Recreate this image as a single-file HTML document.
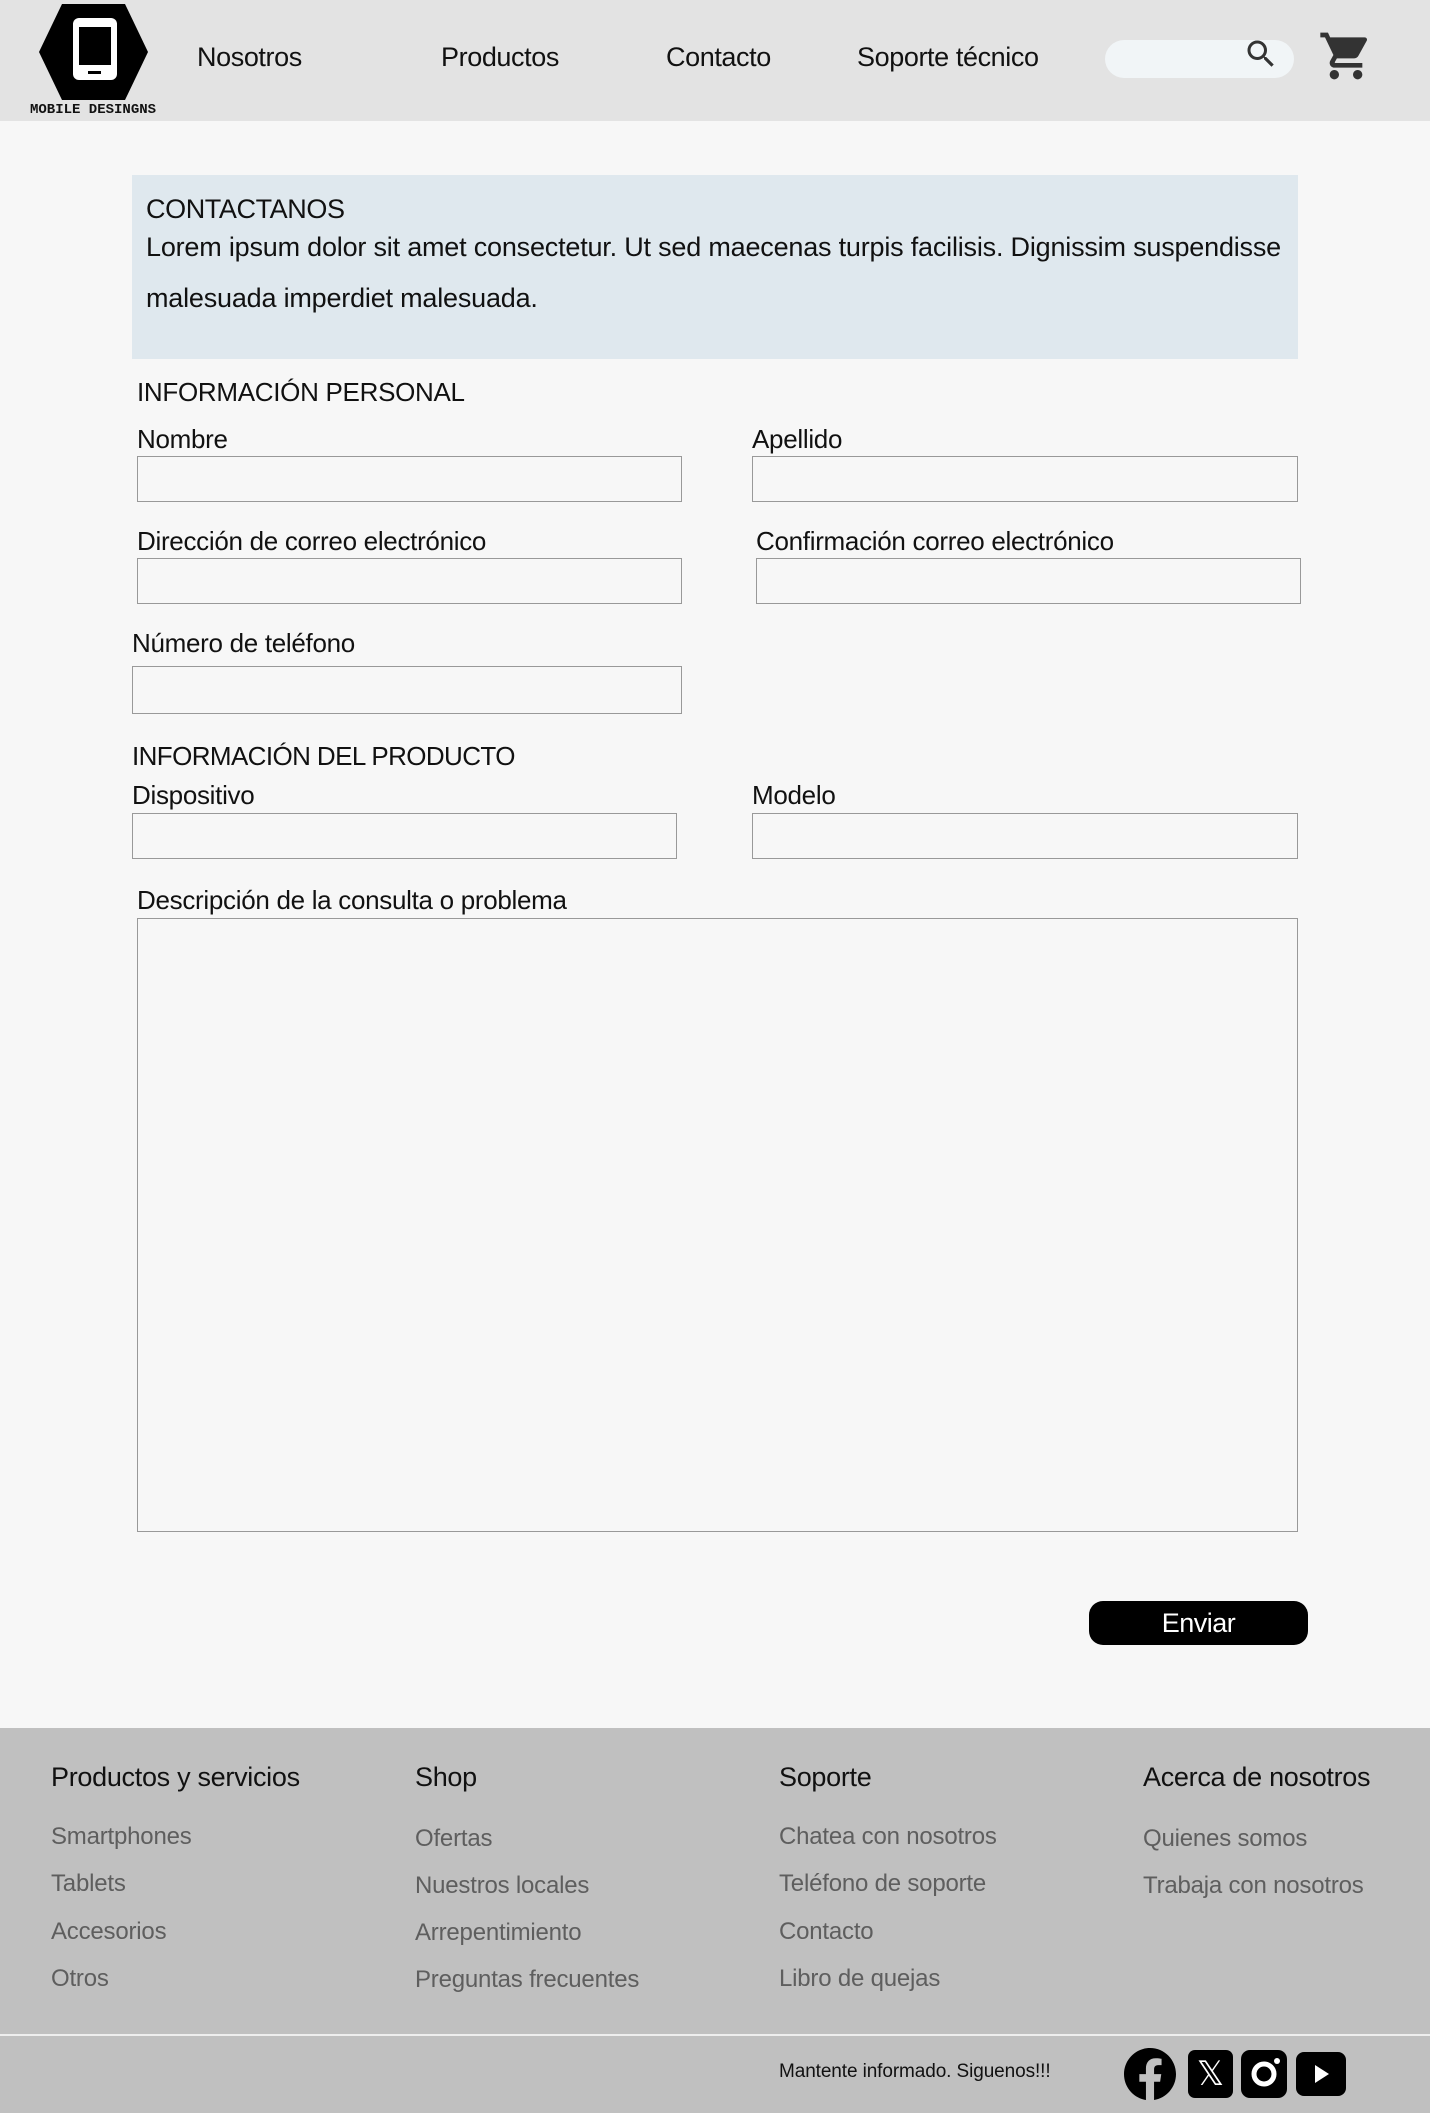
<!DOCTYPE html>
<html><head><meta charset="utf-8"><style>
*{margin:0;padding:0;box-sizing:border-box}
body{width:1430px;height:2113px;background:#f7f7f7;font-family:"Liberation Sans",sans-serif;position:relative;overflow:hidden;color:#111}
.a{position:absolute;white-space:nowrap}
.hdr{position:absolute;left:0;top:0;width:1430px;height:121px;background:#e3e3e3}
.nav{font-size:27px;line-height:32px;letter-spacing:-0.4px}
.lbl{font-size:26px;line-height:30px;letter-spacing:-0.3px}
.in{position:absolute;border:1px solid #999;background:#f7f7f7}
.ft{position:absolute;left:0;top:1728px;width:1430px;height:385px;background:#c0c0c0}
.fh{font-size:27px;line-height:32px;letter-spacing:-0.3px;color:#111}
.fl{font-size:24px;line-height:28px;letter-spacing:-0.2px;color:#5e5e5e}
</style></head><body>
<div class="hdr"></div>
<svg class="a" style="left:0;top:0" width="160" height="121" viewBox="0 0 160 121">
<polygon points="62,4 125,4 148,52 125,100 62,100 39,52" fill="#000"/>
<rect x="73" y="18" width="44" height="62" rx="6" fill="#fff"/>
<rect x="79" y="27" width="32" height="38" fill="#000"/>
<rect x="88" y="71" width="13" height="3" fill="#000"/>
</svg>
<div class="a" style="left:30px;top:102px;font-family:'Liberation Mono',monospace;font-size:14px;line-height:16px;font-weight:bold">MOBILE DESINGNS</div>
<div class="a nav" style="left:197px;top:41px">Nosotros</div>
<div class="a nav" style="left:441px;top:41px">Productos</div>
<div class="a nav" style="left:666px;top:41px">Contacto</div>
<div class="a nav" style="left:857px;top:41px">Soporte técnico</div>
<div class="a" style="left:1105px;top:40px;width:189px;height:38px;border-radius:19px;background:#f1f5f7"></div>
<svg class="a" style="left:1243px;top:36px" width="36" height="36" viewBox="0 0 24 24"><path fill="#333" d="M15.5 14h-.79l-.28-.27A6.47 6.47 0 0016 9.5 6.5 6.5 0 109.5 16c1.610 0 3.09-.59 4.23-1.57l.27.28v.79l5 4.99L20.49 19l-4.99-5zm-6 0C7.01 14 5 11.99 5 9.5S7.01 5 9.5 5 14 7.01 14 9.5 11.99 14 9.5 14z"/></svg>
<svg class="a" style="left:1318px;top:28px" width="56" height="56" viewBox="0 0 24 24"><path fill="#333" d="M7 18c-1.1 0-1.99.9-1.99 2S5.9 22 7 22s2-.9 2-2-.9-2-2-2zM1 2v2h2l3.6 7.59-1.35 2.45c-.16.28-.25.61-.25.96 0 1.1.9 2 2 2h12v-2H7.42c-.14 0-.25-.11-.25-.25l.03-.12.9-1.63h7.45c.75 0 1.41-.41 1.750-1.03l3.58-6.49A1 1 0 0020 4H5.21l-.94-2H1zm16 16c-1.1 0-1.99.9-1.99 2s.89 2 1.99 2 2-.9 2-2-.9-2-2-2z"/></svg>

<div class="a" style="left:132px;top:175px;width:1166px;height:184px;background:#dfe8ee"></div>
<div class="a nav" style="left:146px;top:193px">CONTACTANOS</div>
<div class="a nav" style="left:146px;top:231px;letter-spacing:-0.2px">Lorem ipsum dolor sit amet consectetur. Ut sed maecenas turpis facilisis. Dignissim suspendisse</div>
<div class="a nav" style="left:146px;top:282px;letter-spacing:-0.2px">malesuada imperdiet malesuada.</div>

<div class="a lbl" style="left:137px;top:377px">INFORMACIÓN PERSONAL</div>
<div class="a lbl" style="left:137px;top:424px">Nombre</div>
<div class="in" style="left:137px;top:456px;width:545px;height:46px"></div>
<div class="a lbl" style="left:752px;top:424px">Apellido</div>
<div class="in" style="left:752px;top:456px;width:546px;height:46px"></div>
<div class="a lbl" style="left:137px;top:526px">Dirección de correo electrónico</div>
<div class="in" style="left:137px;top:558px;width:545px;height:46px"></div>
<div class="a lbl" style="left:756px;top:526px">Confirmación correo electrónico</div>
<div class="in" style="left:756px;top:558px;width:545px;height:46px"></div>
<div class="a lbl" style="left:132px;top:628px">Número de teléfono</div>
<div class="in" style="left:132px;top:666px;width:550px;height:48px"></div>
<div class="a lbl" style="left:132px;top:741px;letter-spacing:-0.6px">INFORMACIÓN DEL PRODUCTO</div>
<div class="a lbl" style="left:132px;top:780px">Dispositivo</div>
<div class="in" style="left:132px;top:813px;width:545px;height:46px"></div>
<div class="a lbl" style="left:752px;top:780px">Modelo</div>
<div class="in" style="left:752px;top:813px;width:546px;height:46px"></div>
<div class="a lbl" style="left:137px;top:885px">Descripción de la consulta o problema</div>
<div class="in" style="left:137px;top:918px;width:1161px;height:614px"></div>
<div class="a" style="left:1089px;top:1601px;width:219px;height:44px;border-radius:14px;background:#000;color:#fff;font-size:27px;line-height:44px;text-align:center;letter-spacing:-0.5px">Enviar</div>

<div class="ft"></div>
<div class="a fh" style="left:51px;top:1761px">Productos y servicios</div>
<div class="a fh" style="left:415px;top:1761px">Shop</div>
<div class="a fh" style="left:779px;top:1761px">Soporte</div>
<div class="a fh" style="left:1143px;top:1761px">Acerca de nosotros</div>
<div class="a fl" style="left:51px;top:1823px">Smartphones</div>
<div class="a fl" style="left:51px;top:1870px">Tablets</div>
<div class="a fl" style="left:51px;top:1918px">Accesorios</div>
<div class="a fl" style="left:51px;top:1965px">Otros</div>
<div class="a fl" style="left:415px;top:1825px">Ofertas</div>
<div class="a fl" style="left:415px;top:1872px">Nuestros locales</div>
<div class="a fl" style="left:415px;top:1919px">Arrepentimiento</div>
<div class="a fl" style="left:415px;top:1966px">Preguntas frecuentes</div>
<div class="a fl" style="left:779px;top:1823px">Chatea con nosotros</div>
<div class="a fl" style="left:779px;top:1870px">Teléfono de soporte</div>
<div class="a fl" style="left:779px;top:1918px">Contacto</div>
<div class="a fl" style="left:779px;top:1965px">Libro de quejas</div>
<div class="a fl" style="left:1143px;top:1825px">Quienes somos</div>
<div class="a fl" style="left:1143px;top:1872px">Trabaja con nosotros</div>
<div class="a" style="left:0;top:2034px;width:1430px;height:2px;background:#eee"></div>
<div class="a" style="left:779px;top:2060px;font-size:19px;line-height:24px;letter-spacing:-0.1px">Mantente informado. Siguenos!!!</div>
<svg class="a" style="left:1124px;top:2048px" width="52" height="52" viewBox="0 0 24 24"><path fill="#000" d="M24 12.07C24 5.41 18.63 0 12 0S0 5.4 0 12.07C0 18.1 4.39 23.1 10.13 24v-8.44H7.08v-3.49h3.04V9.41c0-3.02 1.8-4.7 4.54-4.7 1.31 0 2.68.24 2.68.24v2.97h-1.5c-1.5 0-1.96.93-1.96 1.89v2.26h3.32l-.53 3.5h-2.8V24C19.62 23.1 24 18.1 24 12.07"/></svg>
<div class="a" style="left:1188px;top:2050px;width:45px;height:48px;border-radius:7px;background:#000;color:#fff;font-size:34px;line-height:48px;text-align:center;font-family:'DejaVu Sans',sans-serif">𝕏</div>
<svg class="a" style="left:1241px;top:2050px" width="46" height="48" viewBox="0 0 46 48"><rect width="46" height="48" rx="9" fill="#000"/><circle cx="23" cy="24" r="10" fill="none" stroke="#fff" stroke-width="5"/><circle cx="36" cy="11" r="3" fill="#fff"/></svg>
<svg class="a" style="left:1296px;top:2052px" width="50" height="44" viewBox="0 0 50 44"><rect width="50" height="44" rx="8" fill="#000"/><polygon points="19,13 33,22 19,31" fill="#fff"/></svg>
</body></html>
